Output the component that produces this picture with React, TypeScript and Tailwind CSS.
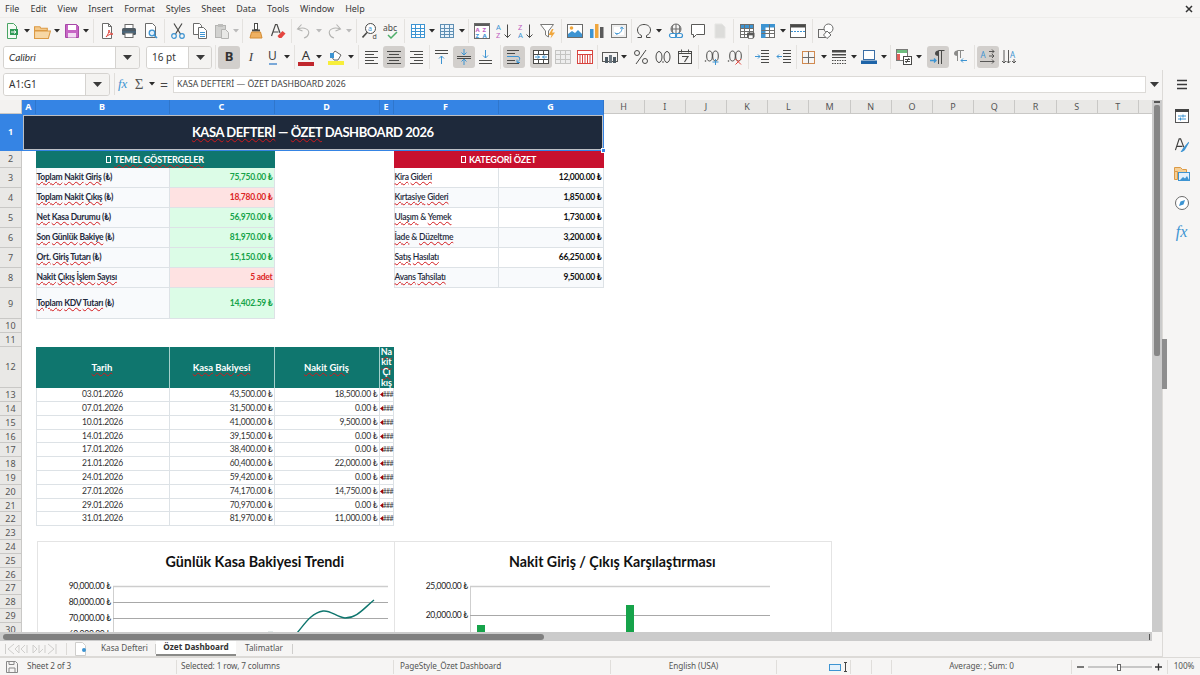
import React from 'react';

const G = '#4a4a48';
const B = '#3d94d2';
const L = '#b4b4b2';

const Ic: React.FC<{ children: React.ReactNode; s?: number }> = ({ children, s = 16 }) => (
  <svg width={s} height={s} viewBox="0 0 16 16" fill="none" strokeWidth="1">
    {children}
  </svg>
);

const Lines = ({ x, w, ys, c = G }: { x: number; w: number; ys: number[]; c?: string }) => (
  <>
    {ys.map((y) => (
      <path key={y} d={`M${x} ${y}.5h${w}`} stroke={c} />
    ))}
  </>
);

const TableGrid = ({ c = B, fill = '#fff', head = 'none' }: { c?: string; fill?: string; head?: string }) => (
  <>
    <rect x="1.5" y="1.5" width="13" height="13" fill={fill} stroke={c} />
    <rect x="2" y="2" width="12" height="3" fill={head} />
    <path d="M1.5 5.5h13M1.5 8.5h13M1.5 11.5h13M5.5 1.5v13M10.5 1.5v13" stroke={c} />
  </>
);

const icons: Record<string, React.ReactNode> = {
  newdoc: (
    <Ic>
      <path d="M3.5.5h6l3 3v12h-9z" fill="#f4fbf4" stroke="#4aa564" />
      <rect x="6" y="6" width="8" height="6" fill="#2f9a55" />
      <path d="M7 9h5M10 7.5 12 9l-2 1.5" stroke="#fff" />
    </Ic>
  ),
  open: (
    <Ic s={17}>
      <path d="M.5 3.5h5l1 1.500h6v2h-12z" fill="#f3c98b" stroke="#dc9a45" />
      <path d="M.5 14.500V7.500h15l-2 7z" fill="#f7d7a5" stroke="#dc9a45" />
    </Ic>
  ),
  save: (
    <Ic>
      <path d="M1.500 1.500h11l2 2v11h-13z" fill="#c765c5" stroke="#a647a6" />
      <rect x="4" y="2" width="8" height="5" fill="#fff" />
      <rect x="4" y="10" width="8" height="4.500" fill="#f3dcf3" />
    </Ic>
  ),
  pdf: (
    <Ic>
      <path d="M3.500.5h6l3 3v12h-9z" fill="#fff" stroke="#6b6b6a" />
      <path d="M9.500.5v3h3" stroke="#6b6b6a" />
      <path d="M7 14c2-2 3-5 3-7 0 3 2 4 4 4-3 0-5 1-7 3z" stroke="#e2453c" fill="#fff" />
    </Ic>
  ),
  print: (
    <Ic>
      <rect x="4" y="1.500" width="8" height="4" fill="#fff" stroke="#6b6b6a" />
      <rect x="1" y="5" width="14" height="7" rx="1.500" fill="#4e5a63" />
      <rect x="4" y="10" width="8" height="4.500" fill="#fff" stroke="#6b6b6a" />
      <rect x="1" y="8.500" width="14" height="1" fill="#3d94d2" opacity=".4" />
    </Ic>
  ),
  preview: (
    <Ic>
      <path d="M2.500.5h7l3 3v11h-10z" fill="#fff" stroke="#6b6b6a" />
      <circle cx="9" cy="10" r="2.800" fill="#e4f1fb" stroke={B} strokeWidth="1.300" />
      <path d="m11 12 3 3" stroke={B} strokeWidth="1.600" />
    </Ic>
  ),
  cut: (
    <Ic>
      <path d="M4 .5 10.500 11M12 .5 5.500 11" stroke={G} strokeWidth="1.200" />
      <circle cx="4" cy="13" r="2.300" stroke={B} strokeWidth="1.200" />
      <circle cx="12" cy="13" r="2.300" stroke={B} strokeWidth="1.200" />
    </Ic>
  ),
  copy: (
    <Ic>
      <path d="M1.500.5h6l2 2v9h-8z" fill="#fff" stroke="#6b6b6a" />
      <path d="M6.500 4.500h5l3 3v8h-8z" fill="#fff" stroke="#6b6b6a" />
      <path d="M8 9.500h5M8 11.500h5M8 13.500h5" stroke={B} />
    </Ic>
  ),
  paste: (
    <Ic>
      <rect x="1.500" y="2.500" width="10" height="12" fill="#d2d2d0" stroke="#b4b4b2" />
      <rect x="4" y="1" width="5" height="3" fill="#bdbdbb" />
      <path d="M7.500 6.500h4l3 3v6h-7z" fill="#e8e8e6" stroke="#b4b4b2" />
    </Ic>
  ),
  brush: (
    <Ic>
      <rect x="6.500" y=".5" width="3" height="6" fill="#fff" stroke={G} />
      <path d="M4 6.500h8v2H4z" fill={G} />
      <path d="M3.500 9h9l1.500 6H2z" fill="#eeb061" stroke="#d48c33" />
    </Ic>
  ),
  clear: (
    <Ic>
      <path d="m1.500 13 4-11.500h1.500L10 10M3 9h5.500" stroke={G} strokeWidth="1.200" />
      <path d="m7.500 13 5-5 3 2.500-4 4.500H9z" fill="#e4453f" />
    </Ic>
  ),
  undo: (
    <Ic>
      <path d="M5.500 1.500 1.500 6l5 2M2 6c6-2.500 12 .5 10.500 5-.6 2-2.500 3.500-4.500 4" stroke={L} strokeWidth="1.100" />
    </Ic>
  ),
  redo: (
    <Ic>
      <path d="M10.500 1.500 14.500 6l-5 2M14 6C8 3.500 2 6.500 3.500 11c.6 2 2.500 3.500 4.500 4" stroke={L} strokeWidth="1.100" />
    </Ic>
  ),
  find: (
    <Ic>
      <circle cx="8.500" cy="5.500" r="5" fill="#fff" stroke={G} />
      <path d="m5 9.500-4.500 5" stroke={G} strokeWidth="1.600" />
      <text x="6.100" y="7.500" fontSize="7" fill={B} fontFamily="Noto Sans">a</text>
      <text x="10.500" y="15.500" fontSize="7" fill={G} fontFamily="Noto Sans">d</text>
    </Ic>
  ),
  spell: (
    <Ic>
      <text x="0" y="8" fontSize="8.500" fill={G} fontFamily="Noto Sans">abc</text>
      <path d="m5 12 3 3 6-6" stroke="#4eaf6a" strokeWidth="1.500" />
    </Ic>
  ),
  table: <Ic><TableGrid /></Ic>,
  table2: (
    <Ic>
      <rect x="1.500" y="1.500" width="13" height="13" fill="#e9f3fb" stroke="#5f8fb3" />
      <path d="M1.500 5.500h13M1.500 8.500h13M1.500 11.500h13M5.500 1.500v13M10.500 1.500v13" stroke="#5f8fb3" />
    </Ic>
  ),
  sort: (
    <Ic>
      <rect x=".5" y=".5" width="15" height="15" fill="#fff" stroke="#6b6b6a" />
      <rect x="1" y="1" width="14" height="2" fill="#5c5c5c" />
      <text x="1.500" y="9" fontSize="6" fill="#c05ec0" fontWeight="700" fontFamily="Noto Sans">A</text>
      <text x="8.500" y="9" fontSize="6" fill="#c05ec0" fontWeight="700" fontFamily="Noto Sans">Z</text>
      <text x="1.500" y="15" fontSize="6" fill={B} fontWeight="700" fontFamily="Noto Sans">Z</text>
      <text x="8.500" y="15" fontSize="6" fill={B} fontWeight="700" fontFamily="Noto Sans">A</text>
    </Ic>
  ),
  asc: (
    <Ic>
      <text x="0" y="7" fontSize="7.500" fill={B} fontFamily="Noto Sans">A</text>
      <text x="0" y="15" fontSize="7.500" fill="#c05ec0" fontFamily="Noto Sans">Z</text>
      <path d="M11.500 1.500v13M8.500 11.500l3 3 3-3" stroke={G} />
    </Ic>
  ),
  desc: (
    <Ic>
      <text x="0" y="7" fontSize="7.500" fill="#c05ec0" fontFamily="Noto Sans">Z</text>
      <text x="0" y="15" fontSize="7.500" fill={B} fontFamily="Noto Sans">A</text>
      <path d="M11.500 1.500v13M8.500 11.500l3 3 3-3" stroke={G} />
    </Ic>
  ),
  filter: (
    <Ic>
      <path d="M.5 1.500h13L8.500 8v6L5.500 12V8z" fill="#fff" stroke="#7a7a78" />
      <path d="M12 6 8.500 12h3l-1 3.500L15 9.500h-3l1.500-3.500z" fill="#f0a63c" />
    </Ic>
  ),
  image: (
    <Ic>
      <rect x=".5" y="1.500" width="15" height="13" fill="#fff" stroke="#6b6b6a" />
      <circle cx="4.500" cy="5" r="1.800" fill="#f0a63c" />
      <path d="M1 14v-3l4-3 3 2 3-3 4 4v3z" fill={B} />
    </Ic>
  ),
  chart: (
    <Ic>
      <rect x="1" y="6" width="3.500" height="9" fill={B} />
      <rect x="6" y="1" width="3.500" height="14" fill="#f0a63c" />
      <rect x="11" y="4" width="3.500" height="11" fill="#5a5a5a" />
    </Ic>
  ),
  pivot: (
    <Ic>
      <rect x=".5" y="1.500" width="15" height="13" fill="#eee" stroke="#7a7a78" />
      <rect x="3" y="4" width="10" height="8" fill="#fff" />
      <path d="M5 11c3 0 6-2 6-6M9 5.500l2-1.500 1.500 2M4 9.500 5 11l2-.5" stroke={B} />
    </Ic>
  ),
  omega: (
    <Ic>
      <path d="M1.500 14.500h4v-2C3 11.500 1.500 9.500 1.500 7c0-3.500 3-5.500 6.500-5.500S14.500 3.500 14.500 7c0 2.500-1.500 4.500-4 5.500v2h4" stroke={G} />
    </Ic>
  ),
  link: (
    <Ic>
      <circle cx="8" cy="6" r="5" stroke="#6b6b6a" />
      <path d="M3 6h10M8 1v10M5 2c-1 2-1 6 0 8M11 2c1 2 1 6 0 8" stroke="#6b6b6a" />
      <rect x="1.500" y="10.500" width="7" height="4" rx="2" fill="#fff" stroke={B} strokeWidth="1.200" />
      <rect x="7.500" y="10.500" width="7" height="4" rx="2" fill="none" stroke={B} strokeWidth="1.200" />
    </Ic>
  ),
  comment: (
    <Ic>
      <path d="M1.500 1.500h13v10H6.500l-3 3v-3h-2z" fill="#fff" stroke="#5a5a58" />
    </Ic>
  ),
  headers: (
    <Ic>
      <path d="M3 1h7l3 3v11H3z" fill="#dcdcda" stroke="#e5e5e3" />
    </Ic>
  ),
  printarea: (
    <Ic>
      <TableGrid c="#6f6f6d" head={B} />
      <rect x="8" y="9.500" width="7.500" height="5" rx="1" fill="#5a5a58" />
      <rect x="9.500" y="12" width="4.500" height="3.500" fill="#fff" stroke="#5a5a58" strokeWidth=".7" />
    </Ic>
  ),
  freeze: (
    <Ic>
      <rect x="1.500" y="1.500" width="13" height="13" fill="#fff" stroke="#6f6f6d" />
      <rect x="1" y="1" width="14" height="3.500" fill={B} />
      <rect x="1" y="1" width="4.500" height="14" fill={B} />
      <path d="M1.500 7.500h13M1.500 10.500h13M9.500 1.500v13" stroke="#6f6f6d" />
    </Ic>
  ),
  split: (
    <Ic>
      <rect x=".5" y="1.500" width="15" height="13" fill="#fff" stroke="#5a5a58" />
      <rect x="1" y="2" width="14" height="2.500" fill="#4a4a48" />
      <path d="M1 8.500h14" stroke={B} strokeDasharray="2 1" />
    </Ic>
  ),
  shapes: (
    <Ic>
      <rect x=".5" y="6.500" width="8" height="8" stroke="#6b6b6a" />
      <circle cx="10.500" cy="5.500" r="4.500" stroke="#6b6b6a" fill="#fff" />
      <path d="m9 8 4 4-4 3.500L5.500 12z" fill="#fff" stroke="#6b6b6a" />
    </Ic>
  ),
  alignL: <Ic><Lines x={1} w={13} ys={[2, 8, 14]} /><Lines x={1} w={9} ys={[5, 11]} /></Ic>,
  alignC: <Ic><Lines x={1} w={14} ys={[2, 8, 14]} /><Lines x={3} w={10} ys={[5, 11]} /></Ic>,
  alignR: <Ic><Lines x={2} w={13} ys={[2, 8, 14]} /><Lines x={6} w={9} ys={[5, 11]} /></Ic>,
  top: (
    <Ic>
      <Lines x={1} w={13} ys={[1, 4]} />
      <path d="M7.500 15V7M5 9.500l2.500-2.500L10 9.500" stroke={B} />
    </Ic>
  ),
  middle: (
    <Ic>
      <Lines x={1} w={14} ys={[7, 9]} />
      <path d="M8 0v5.500M5.500 3.500 8 6l2.500-2.500M8 16v-5.500M5.500 12.500 8 10l2.500 2.500" stroke={B} />
    </Ic>
  ),
  bottom: (
    <Ic>
      <Lines x={1} w={13} ys={[11, 14]} />
      <path d="M7.500 1v8M5 6.500 7.500 9 10 6.500" stroke={B} />
    </Ic>
  ),
  wrap: (
    <Ic>
      <Lines x={1} w={12} ys={[1, 14]} />
      <Lines x={1} w={8} ys={[4, 11]} />
      <path d="M1 7.500h11c2 0 2 3 1 4l-1.500 1.500M11 10.500v3h3" stroke={B} />
    </Ic>
  ),
  merge: (
    <Ic>
      <rect x=".5" y="1.500" width="15" height="13" fill="#fff" stroke={G} />
      <path d="M.5 5.500h15M.5 10.500h15M5.500 1.500v4M10.500 1.500v4M5.500 10.500v4M10.500 10.500v4" stroke={G} />
      <path d="M2 8h4.500M4.500 6.500 6.500 8l-2 1.500M14 8H9.500M11.500 6.500 9.500 8l2 1.500" stroke={B} />
    </Ic>
  ),
  mergeOff: (
    <Ic>
      <rect x=".5" y="1.500" width="15" height="13" fill="#eee" stroke="#c4c4c2" />
      <path d="M.5 5.500h15M.5 10.500h15M5.500 1.500v13M10.500 1.500v13" stroke="#c4c4c2" />
    </Ic>
  ),
  split2: (
    <Ic>
      <rect x=".5" y="1.500" width="15" height="13" fill="#fff" stroke="#d8453f" />
      <path d="M.5 5.500h15M5.500 5.500v9M10.500 5.500v9M3 5.500v9M8 5.500v9M13 5.500v9" stroke="#d8453f" />
    </Ic>
  ),
  numfmt: (
    <Ic>
      <rect x=".5" y="3.500" width="15" height="9" stroke="#5a5a58" />
      <rect x="3" y="8" width="3" height="6" fill="#4e5a63" />
      <rect x="7" y="6" width="3" height="8" fill="#6f7a83" />
      <rect x="11" y="8" width="3" height="6" fill="#4e5a63" />
    </Ic>
  ),
  percent: (
    <Ic>
      <circle cx="4" cy="4" r="2.500" stroke={G} />
      <circle cx="12" cy="12" r="2.500" stroke={G} />
      <path d="M13 1 3 15" stroke={G} />
    </Ic>
  ),
  num: (
    <Ic>
      <ellipse cx="4" cy="8" rx="3" ry="5.500" stroke={G} />
      <ellipse cx="12" cy="8" rx="3" ry="5.500" stroke={G} />
      <circle cx="8" cy="13" r=".8" fill={G} />
    </Ic>
  ),
  date: (
    <Ic>
      <rect x="1.500" y="2.500" width="13" height="12" stroke={G} />
      <path d="M1.500 4.500h13M4.500 .5v3M11.500 .5v3" stroke={G} />
      <path d="M5 7.500h6L7.500 13" stroke={G} strokeWidth="1.200" />
    </Ic>
  ),
  addDec: (
    <Ic>
      <circle cx="1.500" cy="12" r=".8" fill={G} />
      <ellipse cx="5.500" cy="7" rx="2.800" ry="5" stroke={G} />
      <ellipse cx="11.500" cy="7" rx="2.800" ry="5" stroke={G} />
      <path d="M11.500 10v6M8.500 13h6" stroke={B} />
    </Ic>
  ),
  delDec: (
    <Ic>
      <circle cx="1.500" cy="12" r=".8" fill={G} />
      <ellipse cx="5.500" cy="7" rx="2.800" ry="5" stroke={G} />
      <ellipse cx="11.500" cy="7" rx="2.800" ry="5" stroke={G} />
      <path d="m8.500 10 5.500 5.500M14 10l-5.500 5.500" stroke="#e2453c" />
    </Ic>
  ),
  indent: (
    <Ic>
      <Lines x={7} w={8} ys={[1, 4, 7, 10, 13]} />
      <path d="M1 7.500h5M4 5.500l2 2-2 2" stroke={B} />
    </Ic>
  ),
  outdent: (
    <Ic>
      <Lines x={7} w={8} ys={[1, 4, 7, 10, 13]} />
      <path d="M6 7.500H1M3 5.500l-2 2 2 2" stroke={B} />
    </Ic>
  ),
  border: (
    <Ic>
      <rect x="1.500" y="2.500" width="12" height="12" stroke="#d18a50" />
      <path d="M7.500 2.500v12M1.500 8.500h12" stroke="#6b6b6a" />
    </Ic>
  ),
  borderStyle: (
    <Ic>
      <rect x="1" y="1" width="14" height="2.500" fill={G} />
      <rect x="1" y="5" width="14" height="1.500" fill={G} />
      <rect x="1" y="8" width="14" height="1" fill={G} />
      <path d="M1 11.500h14M1 14.500h14" stroke={G} strokeDasharray="1.500 1" />
    </Ic>
  ),
  borderColor: (
    <Ic>
      <rect x="2.500" y="1.500" width="11" height="9" fill="#fff" stroke="#3b6ea5" />
      <rect x="0" y="11.500" width="16" height="3.500" fill="#1e64a8" />
    </Ic>
  ),
  cond: (
    <Ic>
      <rect x=".5" y=".5" width="11" height="11" fill="#fff" stroke="#7a7a78" />
      <rect x="1" y="1" width="10" height="3" fill="#6fbd7f" />
      <rect x="1" y="5" width="3" height="6" fill="#e2605a" />
      <rect x="7.500" y="7.500" width="8" height="8" fill="#fff" stroke={G} />
      <path d="M9 10.500h5M9 12.500h5M13 9l-3 5" stroke={G} />
    </Ic>
  ),
  ltr: (
    <Ic>
      <path d="M8.500 15V1.500h6M11.500 1.500V15" stroke={G} />
      <path d="M8.500 7C6 7 5 6 5 4.500S6 1.500 8.500 1.500z" fill={G} />
      <path d="M0 11.500h6M4 9.500l2 2-2 2" stroke={B} strokeWidth="1.300" />
    </Ic>
  ),
  rtl: (
    <Ic>
      <path d="M5.500 12V1.500H12M8.500 1.500V9" stroke="#8b8b89" />
      <path d="M5.500 7C3 7 2 6 2 4.500s1-3 3.500-3z" fill="#8b8b89" />
      <path d="M15 11.500H9M11 9.500l-2 2 2 2" stroke={B} />
    </Ic>
  ),
  hText: (
    <Ic>
      <text x=".5" y="9" fontSize="8" fill={B} fontFamily="Noto Sans">A</text>
      <path d="M9 2.500h5M12 .5l2 2-2 2M9 7h5M12 5l2 2-2 2M0 12.500h14M12 10.500l2 2-2 2" stroke={G} strokeWidth=".9" />
    </Ic>
  ),
  vText: (
    <Ic>
      <text x="8" y="9" fontSize="8" fill={B} fontFamily="Noto Sans">A</text>
      <path d="M2 1v13M0 12l2 2 2-2M6.500 1v13M4.500 12l2 2 2-2M12 10v4M10 12l2 2 2-2" stroke={G} strokeWidth=".9" />
    </Ic>
  ),
};

const I = ({ n, on = false, w = 'w-[22px]' }: { n: string; on?: boolean; w?: string }) => (
  <div className={`${w} h-[22px] shrink-0 flex items-center justify-center rounded-[3px] ${on ? 'bg-[#d2cfcc]' : ''}`}>
    {icons[n]}
  </div>
);

const Dd = ({ c = '#2b2b2b' }: { c?: string }) => (
  <div className="w-[8px] h-[22px] shrink-0 flex items-center justify-center">
    <svg width="6" height="4" viewBox="0 0 6 4"><path d="M0 0h6L3 3.500z" fill={c} /></svg>
  </div>
);

const Sep = ({ w = 'w-[5px]' }: { w?: string }) => (
  <div className={`${w} h-[24px] shrink-0 flex justify-center`}>
    <div className="w-px h-full bg-[#e4e2df]" />
  </div>
);

const Gap = ({ w }: { w: string }) => <div className={`${w} shrink-0`} />;

const Caret = () => (
  <svg width="9" height="5" viewBox="0 0 9 5"><path d="M0 0h9L4.500 5z" fill="#3a3a3a" /></svg>
);

const Combo = ({ text, box, btn, italic }: { text: string; box: string; btn: string; italic?: boolean }) => (
  <div className={`${box} h-[23px] shrink-0 flex border border-[#d5d3d0] rounded-[3px] overflow-hidden`}>
    <div className={`flex-1 bg-white flex items-center pl-[5px] text-[10px] text-[#333] ${italic ? 'italic font-["Lato"]' : ''}`}>{text}</div>
    <div className={`${btn} bg-[#f4f3f1] border-l border-[#d5d3d0] flex items-center justify-center`}><Caret /></div>
  </div>
);

const menu = ['File', 'Edit', 'View', 'Insert', 'Format', 'Styles', 'Sheet', 'Data', 'Tools', 'Window', 'Help'];

const Toolbars = () => (
  <div className="shrink-0">
    <div className="h-[18px] flex items-center pl-[5px] pr-[7px] gap-[11px] text-[9px] text-[#3a3a3a] border-b border-[#eeedeb]">
      {menu.map((m) => <span key={m}>{m}</span>)}
      <svg className="ml-auto" width="8" height="8" viewBox="0 0 8 8"><path d="m1 1 6 6M7 1 1 7" stroke="#333" strokeWidth="1.500" /></svg>
    </div>
    <div className="h-[26px] flex items-center pl-px">
      <I n="newdoc" /><Dd /><I n="open" /><Dd /><I n="save" w="w-[21px]" /><Dd /><Sep w="w-[6px]" />
      <I n="pdf" /><I n="print" /><I n="preview" /><Sep />
      <I n="cut" /><I n="copy" /><I n="paste" w="w-[21px]" /><Dd c="#bbb" /><Sep />
      <I n="brush" /><I n="clear" /><Sep w="w-[4px]" />
      <I n="undo" /><Dd c="#bbb" /><I n="redo" /><Dd c="#bbb" /><Sep w="w-[6px]" />
      <I n="find" w="w-[21px]" /><I n="spell" /><Sep />
      <I n="table" w="w-[21px]" /><Dd /><I n="table2" /><Dd /><Sep />
      <I n="sort" /><I n="asc" /><I n="desc" /><I n="filter" /><Sep />
      <I n="image" /><I n="chart" /><I n="pivot" /><Sep w="w-[3px]" />
      <I n="omega" /><Dd /><Gap w="w-[2px]" /><I n="link" /><I n="comment" /><I n="headers" /><Sep />
      <I n="printarea" w="w-[21px]" /><I n="freeze" /><Dd /><I n="split" /><Sep w="w-[6px]" />
      <I n="shapes" />
    </div>
    <div className="h-[26px] flex items-center pl-[3px]">
      <Combo text="Calibri" box="w-[137px]" btn="w-[24px]" italic />
      <Gap w="w-[6px]" />
      <Combo text="16 pt" box="w-[66px]" btn="w-[23px]" />
      <Sep w="w-[6px]" />
      <div className="w-[22px] h-[23px] shrink-0 rounded-[3px] bg-[#d2cfcc] flex items-center justify-center text-[13px] font-bold text-[#333]">B</div>
      <div className="w-[22px] h-[22px] shrink-0 flex items-center justify-center text-[13px] italic text-[#444] font-['Liberation_Serif']">I</div>
      <div className="w-[21px] h-[22px] shrink-0 flex flex-col items-center justify-center text-[12px] leading-[12px] text-[#444]">U<div className="w-[8px] h-[2px] mt-px bg-[#7aa8d8]" /></div>
      <Dd /><Sep w="w-[6px]" />
      <div className="w-[18px] h-[22px] shrink-0 flex flex-col items-center justify-center text-[13px] leading-[13px] text-[#333]">A<div className="w-[16px] h-[4px] bg-[#c1272d]" /></div>
      <Dd />
      <Gap w="w-[2px]" />
      <div className="w-[22px] h-[22px] shrink-0 flex flex-col items-center justify-center">
        <svg width="14" height="11" viewBox="0 0 14 11"><path d="m6 1 6 4-3 5H5L2 6z" fill="#fff" stroke="#666" /><path d="M1 3h4v5H1z" fill="#3d94d2" /></svg>
        <div className="w-[16px] h-[4px] bg-[#f7ee3a]" />
      </div>
      <Dd /><Sep w="w-[6px]" />
      <I n="alignL" /><I n="alignC" on /><I n="alignR" /><Sep w="w-[4px]" />
      <I n="top" /><I n="middle" on /><I n="bottom" /><Sep w="w-[6px]" />
      <I n="wrap" on /><Gap w="w-[5px]" /><I n="merge" on /><I n="mergeOff" /><I n="split2" /><Sep w="w-[3px]" />
      <I n="numfmt" w="w-[21px]" /><Dd /><Gap w="w-[2px]" /><I n="percent" /><I n="num" /><I n="date" /><Sep w="w-[5px]" />
      <I n="addDec" /><Gap w="w-px" /><I n="delDec" /><Sep w="w-[5px]" />
      <I n="indent" /><I n="outdent" /><Sep w="w-[3px]" />
      <I n="border" /><Dd /><I n="borderStyle" /><Dd /><I n="borderColor" /><Dd /><Sep w="w-[5px]" />
      <I n="cond" /><Dd /><Gap w="w-[4px]" />
      <I n="ltr" on /><I n="rtl" /><Sep w="w-[6px]" />
      <I n="hText" on /><I n="vText" />
    </div>
  </div>
);

const FormulaBar = () => (
  <div className="h-[30px] shrink-0 flex items-center pl-[3px] pb-[2px]">
    <Combo text="A1:G1" box="w-[107px]" btn="w-[24px]" />
    <Gap w="w-[4px]" />
    <div className="w-px h-[22px] bg-[#e0dedb] mr-[3px]" />
    <span className="w-[14px] text-[13px] italic text-[#3d94d2] font-['Liberation_Serif']">fx</span>
    <span className="w-[14px] text-center text-[15px] text-[#555] font-['Liberation_Serif']">Σ</span>
    <Gap w="w-[2px]" />
    <Dd />
    <span className="w-[16px] text-center text-[14px] text-[#444]">=</span>
    <div className="flex-1 h-[17px] bg-white border border-[#dcdad7] flex items-center pl-[3px] pt-px text-[8.700px] text-[#444] ml-px">KASA DEFTERİ — ÖZET DASHBOARD 2026</div>
    <div className="w-[16px] flex justify-center"><Caret /></div>
  </div>
);

const Wv = ({ children }: { children: React.ReactNode }) => (
  <span className="underline decoration-wavy decoration-[#d3191c] decoration-1 underline-offset-[1px]">{children}</span>
);

const Waved = ({ t, plain = [] }: { t: string; plain?: string[] }) => (
  <span>
    {t.split(' ').map((w, i) => (
      <React.Fragment key={i}>
        {i > 0 && ' '}
        {w.includes('₺') || w === '&' || plain.includes(w) ? w : <Wv>{w}</Wv>}
      </React.Fragment>
    ))}
  </span>
);

const RowHead = ({ n, on }: { n: number; on?: boolean }) => (
  <div className={`w-[22px] shrink-0 flex items-center justify-center text-[9px] tracking-normal font-['Noto_Sans'] border-b border-r ${on ? 'bg-[#3584e4] text-white font-bold border-[#3584e4]' : 'bg-[#e9e8e6] text-[#555] border-[#c9c8c6]'}`}>{n}</div>
);

const Tofu = () => <span className="inline-block w-[5px] h-[7px] border border-current mr-[3px]" />;

const kpi = [
  ['Toplam Nakit Giriş (₺)', '75,750.00 ₺', true],
  ['Toplam Nakit Çıkış (₺)', '18,780.00 ₺', false],
  ['Net Kasa Durumu (₺)', '56,970.00 ₺', true],
  ['Son Günlük Bakiye (₺)', '81,970.00 ₺', true],
  ['Ort. Giriş Tutarı (₺)', '15,150.00 ₺', true],
  ['Nakit Çıkış İşlem Sayısı', '5 adet', false],
  ['Toplam KDV Tutarı (₺)', '14,402.59 ₺', true],
] as const;

const cats = [
  ['Kira Gideri', '12,000.00 ₺'],
  ['Kırtasiye Gideri', '1,850.00 ₺'],
  ['Ulaşım & Yemek', '1,730.00 ₺'],
  ['İade & Düzeltme', '3,200.00 ₺'],
  ['Satış Hasılatı', '66,250.00 ₺'],
  ['Avans Tahsilatı', '9,500.00 ₺'],
];

const ledger = [
  ['03.01.2026', '43,500.00 ₺', '18,500.00 ₺'],
  ['07.01.2026', '31,500.00 ₺', '0.00 ₺'],
  ['10.01.2026', '41,000.00 ₺', '9,500.00 ₺'],
  ['14.01.2026', '39,150.00 ₺', '0.00 ₺'],
  ['17.01.2026', '38,400.00 ₺', '0.00 ₺'],
  ['21.01.2026', '60,400.00 ₺', '22,000.00 ₺'],
  ['24.01.2026', '59,420.00 ₺', '0.00 ₺'],
  ['27.01.2026', '74,170.00 ₺', '14,750.00 ₺'],
  ['29.01.2026', '70,970.00 ₺', '0.00 ₺'],
  ['31.01.2026', '81,970.00 ₺', '11,000.00 ₺'],
];

const colA = 'w-[13.5px] shrink-0';
const cellB = 'w-[134px] shrink-0 flex items-center border-r border-b border-[#dde2e6]';
const cellC = 'w-[105px] shrink-0 flex items-center justify-end pr-px border-r border-b border-[#dde2e6]';

const KpiRow = ({ i, h }: { i: number; h: string }) => {
  const k = kpi[i];
  const c = cats[i];
  return (
    <div className={`${h} flex`}>
      <RowHead n={i + 3} />
      <div className={colA} />
      <div className={`${cellB} border-l bg-[#f8fafc] font-bold text-[#1e293b]`}><Waved t={k[0]} /></div>
      <div className={`${cellC} font-bold ${k[2] ? 'bg-[#dcfce7] text-[#16a34a]' : 'bg-[#fee2e2] text-[#dc2626]'}`}>{k[1]}</div>
      <div className="w-[105px] shrink-0" />
      <div className="w-[14px] shrink-0" />
      {c && (
        <>
          <div className={`w-[105px] shrink-0 flex items-center border-l border-r border-b border-[#dde2e6] font-semibold text-[#1e293b] ${i % 2 === 0 ? 'bg-white' : 'bg-[#f8fafc]'}`}><Waved t={c[0]} /></div>
          <div className={`${cellC} font-bold text-[#111] ${i % 2 === 0 ? 'bg-white' : 'bg-[#f8fafc]'}`}>{c[1]}</div>
        </>
      )}
    </div>
  );
};

const Blank = ({ n, h }: { n: number; h: string }) => (
  <div className={`${h} flex`}><RowHead n={n} /></div>
);

const colHeads = ['H', 'I', 'J', 'K', 'L', 'M', 'N', 'O', 'P', 'Q', 'R', 'S', 'T'];

const ColHead = () => (
  <div className="h-[14px] shrink-0 flex font-['Noto_Sans'] text-[9px]">
    <div className="w-[22px] shrink-0 bg-[#f3f2f0] border-r border-b border-[#c9c8c6]" />
    {[['A', 'w-[13.5px]'], ['B', 'w-[134px]'], ['C', 'w-[105px]'], ['D', 'w-[105px]'], ['E', 'w-[14px]'], ['F', 'w-[105px]'], ['G', 'w-[105px]']].map(([l, w]) => (
      <div key={l} className={`${w} shrink-0 flex items-center justify-center bg-[#3584e4] text-white font-bold border-r border-[#2f76cc]`}>{l}</div>
    ))}
    {colHeads.map((l) => (
      <div key={l} className="w-[41.2px] shrink-0 flex items-center justify-center bg-[#e9e8e6] text-[#555] border-r border-b border-[#c9c8c6]">{l}</div>
    ))}
    <div className="flex-1 bg-[#e9e8e6] border-b border-[#c9c8c6]" />
  </div>
);

const Sheet = () => (
  <div className="relative flex-1 overflow-hidden bg-white font-['Lato'] text-[8.500px] tracking-[-0.25px] leading-[11px] text-[#333]">
    <div className="h-[36.7px] flex">
      <RowHead n={1} on />
      <div className="relative w-[581.5px] shrink-0 flex items-center justify-center bg-[#1e293b] text-white text-[13px] tracking-[-0.45px] font-bold border border-[#3584e4] outline outline-1 -outline-offset-2 outline-white/70">
        <Waved t="KASA DEFTERİ — ÖZET DASHBOARD 2026" plain={['—', 'DASHBOARD', '2026']} />
        <div className="absolute right-[-3px] bottom-[-3px] w-[5px] h-[5px] bg-[#3584e4] border border-white z-10" />
      </div>
    </div>
    <div className="h-[17.6px] flex">
      <RowHead n={2} />
      <div className={colA} />
      <div className="w-[239px] shrink-0 flex items-center justify-center bg-[#0f766e] text-white text-[9px] font-bold tracking-[-0.2px]"><Tofu /><Waved t="TEMEL GÖSTERGELER" /></div>
      <div className="w-[105px] shrink-0" />
      <div className="w-[14px] shrink-0" />
      <div className="w-[210px] shrink-0 flex items-center justify-center bg-[#c8102e] text-white text-[9px] font-bold tracking-[-0.2px]"><Tofu /><span>KATEGORİ ÖZET</span></div>
    </div>
    {[0, 1, 2, 3, 4, 5].map((i) => <KpiRow key={i} i={i} h="h-[20px]" />)}
    <KpiRow i={6} h="h-[31px]" />
    <Blank n={10} h="h-[13.400px]" />
    <Blank n={11} h="h-[14px]" />
    <div className="h-[41.600px] flex">
      <RowHead n={12} />
      <div className={colA} />
      {['Tarih', 'Kasa Bakiyesi', 'Nakit Giriş'].map((t, i) => (
        <div key={t} className={`${i === 0 ? 'w-[134px]' : 'w-[105px]'} shrink-0 flex items-center justify-center bg-[#0f766e] text-white text-[9.500px] tracking-normal font-bold border-r border-[#a5d0cb]`}><Waved t={t} /></div>
      ))}
      <div className="w-[14px] shrink-0 bg-[#0f766e] text-white font-bold text-[9px] leading-[10.300px] tracking-normal text-center overflow-hidden">
        <Wv>Na</Wv><br /><Wv>kit</Wv><br /><Wv>Çı</Wv><br /><Wv>kış</Wv>
      </div>
    </div>
    {ledger.map((r, i) => (
      <div key={r[0]} className="h-[13.800px] flex">
        <RowHead n={13 + i} />
        <div className={colA} />
        <div className={`${cellB} border-l justify-center`}>{r[0]}</div>
        <div className={cellC}>{r[1]}</div>
        <div className={cellC}>{r[2]}</div>
        <div className="w-[14px] shrink-0 flex items-center border-r border-b border-[#dde2e6]">
          <svg className="shrink-0" width="3" height="5" viewBox="0 0 3 5"><path d="M3 0v5L0 2.500z" fill="#a00000" /></svg>
          <span className="text-[7px] tracking-[-0.5px]">###</span>
        </div>
      </div>
    ))}
    {[23, 24, 25, 26, 27, 28, 29, 30].map((n) => <Blank key={n} n={n} h="h-[13.800px]" />)}

    {/* charts float over the cells */}
    <div className="absolute left-[36.500px] top-[427px] w-[358px] h-[110px] bg-white border border-[#e4e4e4]">
      <div className="absolute left-[128px] top-[10px] text-[14.300px] tracking-normal leading-[20px] font-bold text-[#111] whitespace-nowrap">Günlük Kasa Bakiyesi Trendi</div>
      <svg className="absolute left-0 top-0" width="358" height="110" viewBox="0 0 358 110">
        <g fill="#222" fontSize="8.500" letterSpacing="-0.3" fontFamily="Lato" textAnchor="end">
          <text x="73" y="47">90,000.00 ₺</text>
          <text x="73" y="63">80,000.00 ₺</text>
          <text x="73" y="79">70,000.00 ₺</text>
          <text x="73" y="95">60,000.00 ₺</text>
        </g>
        <path d="M75.500 44v60" stroke="#cfcfcf" />
        <path d="M75 44.500h275" stroke="#cdcdcd" strokeWidth="1.500" />
        <path d="M75 60.500h275M75 76.500h275M75 92.500h275" stroke="#a8a8a8" />
        <path d="M230 90.500h5" stroke="#c9d6d4" strokeWidth="2" />
        <path d="M259 91c7-8 14-20 26-22 8-1 13 6 22 7 12 0 18-9 29-18" fill="none" stroke="#0f766e" strokeWidth="1.400" />
      </svg>
    </div>
    <div className="absolute left-[394px] top-[427px] w-[437.500px] h-[110px] bg-white border border-[#e4e4e4]">
      <div className="absolute left-[114px] top-[10px] text-[14.200px] tracking-normal leading-[20px] font-bold text-[#111] whitespace-nowrap">Nakit Giriş / Çıkış Karşılaştırması</div>
      <svg className="absolute left-0 top-0" width="437" height="110" viewBox="0 0 437 110">
        <g fill="#222" fontSize="8.500" letterSpacing="-0.3" fontFamily="Lato" textAnchor="end">
          <text x="73" y="47">25,000.00 ₺</text>
          <text x="73" y="76">20,000.00 ₺</text>
        </g>
        <path d="M75.500 44v60" stroke="#cfcfcf" />
        <path d="M75 44.500h300" stroke="#cdcdcd" strokeWidth="1.500" />
        <path d="M75 73.500h300" stroke="#a8a8a8" />
        <rect x="82" y="83" width="8" height="20" fill="#16a34a" />
        <rect x="231" y="63" width="8" height="40" fill="#16a34a" />
      </svg>
    </div>
  </div>
);

const Tabs = () => (
  <div className="h-[16px] shrink-0 flex items-center text-[8.200px] text-[#555] border-b border-[#dcdad7] whitespace-nowrap">
    <div className="w-[66px] pl-[5px] shrink-0">
      <svg width="60" height="12" viewBox="0 0 60 12" fill="none" stroke="#cfcecc">
        <path d="M.5 1v10M9 1 3 6l6 5M10 6l4-4v8zM20 2l-4 4 4 4M22 2v8M28 2v8l4-4zM34 2v8l4-4M40 2v8M43 1l6 5-6 5M51 1v10" />
      </svg>
    </div>
    <div className="w-px h-[12px] bg-[#dcdad7] shrink-0" />
    <div className="w-[30px] flex items-center pl-[8px] shrink-0">
      <svg width="12" height="14" viewBox="0 0 12 14"><path d="M.5.5h7l3 3v10H.5z" fill="#fff" stroke="#cfcecc" /><circle cx="9" cy="8" r="2" fill="#3d94d2" /></svg>
    </div>
    <span className="w-[54px] pl-[4px] shrink-0">Kasa Defteri</span>
    <div className="w-px h-[10px] bg-[#cfcecc] shrink-0 ml-[4px]" />
    <div className="w-[80px] h-full shrink-0 bg-white border-b-2 border-[#8a8a88] flex items-center justify-center font-bold text-[#333]">Özet Dashboard</div>
    <span className="pl-[9px] w-[56px] shrink-0">Talimatlar</span>
    <div className="w-px h-[10px] bg-[#cfcecc] shrink-0" />
  </div>
);

const HScroll = () => (
  <div className="h-[9px] shrink-0 flex items-center bg-[#cbcbcb] pl-[3px] mr-[10px]">
    <div className="w-[541px] h-[6px] rounded-[3px] bg-[#7f7f7f]" />
    <div className="ml-auto w-px h-[6px] bg-[#555] mr-[2px]" />
  </div>
);

const VScroll = () => (
  <div className="w-[10px] shrink-0 bg-[#cbcbcb]">
    <div className="w-[6px] h-[2px] bg-[#555] ml-[2px] mt-px" />
    <div className="w-[6px] h-[251px] bg-[#868686] ml-[2px] mt-[2px] rounded-[2px]" />
  </div>
);

const Sidebar = () => (
  <div className="relative w-[38px] shrink-0 border-l border-[#dcdad7] flex flex-col items-center pt-[9px] gap-[13px]">
    <svg width="12" height="11" viewBox="0 0 12 11"><path d="M1 1.500h10M1 5.500h10M1 9.500h10" stroke="#3a3a3a" strokeWidth="1.300" /></svg>
    <div className="mt-[5px] h-[16px]">
      <svg width="16" height="16" viewBox="0 0 16 16"><rect x="1.500" y="1.500" width="13" height="13" fill="#fff" stroke="#555" /><rect x="1" y="1" width="14" height="3" fill="#444" /><path d="M4 8h8M4 11h8" stroke="#3d94d2" /><path d="M9 6.500v3M6.500 9.500v3" stroke="#3d94d2" /></svg>
    </div>
    <svg width="16" height="16" viewBox="0 0 16 17"><path d="m1 14 4-12h1.500L10 11M2.500 10h6" stroke="#3f3f3e" fill="none" strokeWidth="1.200" /><path d="m15 5-6 7-2.500 4c2 0 4-1 5-3l4-7z" fill="#3d94d2" /></svg>
    <svg width="16" height="16" viewBox="0 0 16 16"><path d="M.5 1.500h6l2 2h4v3H.5z" fill="#f5cf96" stroke="#dc9a45" /><path d="M.5 13.500v-8h3v8z" fill="#f5cf96" stroke="#dc9a45" /><rect x="4.500" y="6.500" width="11" height="8" fill="#e4f1fb" stroke="#3d94d2" /><path d="m6 14 3-3 2 1.500 2-2.500 2 4z" fill="#3d94d2" /></svg>
    <svg width="16" height="16" viewBox="0 0 16 16"><circle cx="8" cy="8" r="6.500" fill="#fff" stroke="#6b6b6a" /><path d="m11 5-1.500 4.500L5 11l1.500-4.500z" fill="#3d94d2" /></svg>
    <span className="italic text-[16px] leading-[16px] text-[#3d94d2] font-['Liberation_Serif']">fx</span>
    <div className="absolute left-[-1px] top-[269px] w-[5px] h-[50px] bg-[#8e8e8e]" />
  </div>
);

const StatusSep = () => <div className="w-px h-[14px] bg-[#e0dedb] shrink-0" />;

const Status = () => (
  <div className="h-[18px] shrink-0 flex items-center text-[8.200px] tracking-[-0.1px] text-[#555] border-t border-[#dcdad7] whitespace-nowrap">
    <div className="w-[26px] pl-[6px] shrink-0">
      <svg width="12" height="12" viewBox="0 0 12 12" fill="none" stroke="#888"><path d="M.5.5h9l2 2v9H.5z" /><path d="M3 .5v3h5v-3M3 11.500V7h6v4.500" /></svg>
    </div>
    <span className="w-[150px] pl-px shrink-0">Sheet 2 of 3</span>
    <StatusSep />
    <span className="w-[216px] pl-[4px] shrink-0">Selected: 1 row, 7 columns</span>
    <StatusSep />
    <span className="w-[216px] pl-[6px] shrink-0">PageStyle_Özet Dashboard</span>
    <StatusSep />
    <span className="w-[165px] text-center shrink-0">English (USA)</span>
    <StatusSep />
    <div className="w-[73px] flex items-center justify-end pr-[2px] shrink-0">
      <svg width="19" height="10" viewBox="0 0 19 10" fill="none"><rect x=".5" y="2.500" width="11" height="6" fill="#e4f1fb" stroke="#3d94d2" /><path d="M15 .5h3M16.500.5v9M15 9.500h3" stroke="#444" /></svg>
    </div>
    <StatusSep />
    <div className="w-[20px] shrink-0" />
    <StatusSep />
    <div className="w-[19px] shrink-0" />
    <StatusSep />
    <span className="w-[179px] text-center shrink-0">Average: ; Sum: 0</span>
    <StatusSep />
    <svg className="ml-[5px] shrink-0" width="88" height="10" viewBox="0 0 88 10" fill="none">
      <path d="M0 5h7" stroke="#333" strokeWidth="1.300" />
      <path d="M11 5h64" stroke="#999" />
      <rect x="40.500" y="2.500" width="3" height="6" fill="#fff" stroke="#666" />
      <path d="M78 5h7M81.500 1.500v7" stroke="#333" strokeWidth="1.300" />
    </svg>
    <div className="w-px h-[14px] bg-[#e0dedb] shrink-0 ml-[2px]" />
    <span className="flex-1 text-center">100%</span>
  </div>
);

export default function App() {
  return (
    <div className="w-[1200px] h-[675px] flex flex-col overflow-hidden bg-[#f6f5f4] font-['Noto_Sans',sans-serif]">
      <Toolbars />
      <div className="flex-1 min-h-0 flex">
        <div className="flex-1 min-w-0 flex flex-col">
          <FormulaBar />
          <div className="flex-1 min-h-0 flex">
            <div className="flex-1 min-w-0 flex flex-col">
              <ColHead />
              <Sheet />
            </div>
            <VScroll />
          </div>
          <HScroll />
          <Tabs />
        </div>
        <Sidebar />
      </div>
      <Status />
    </div>
  );
}
